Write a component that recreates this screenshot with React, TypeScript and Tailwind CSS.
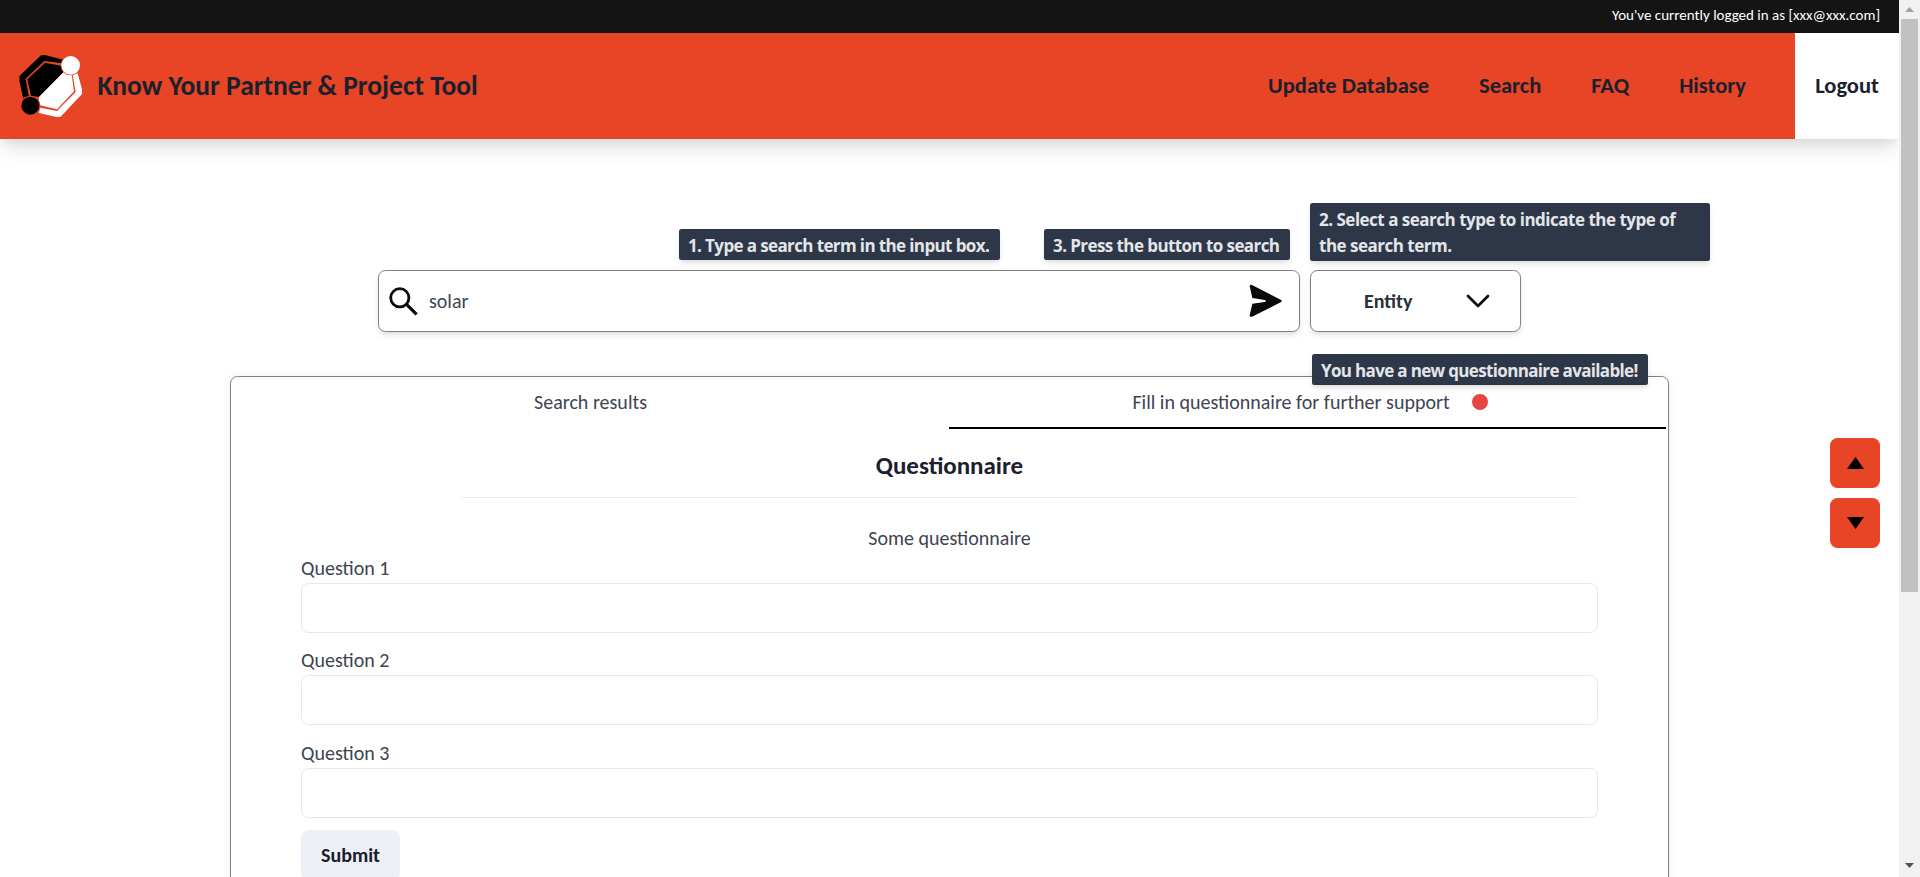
import React from "react";

function Logo() {
  return (
    <svg className="h-[64px] w-[64px] shrink-0" viewBox="26 42 192 192">
      <path d="M28 107 L92 46 L104 45 L158 59 L154 70 L102 63 L46 116 L56 172 L38 173 L27 122 Z" fill="#000" />
      <path d="M215 162 L151 230 L138 231 L86 219 L89 203 L140 213 L196 156 L187 104 L202 100 L215 148 Z" fill="#fff" />
      <path d="M51 118 L104 68 L152 77 L160 96 L86 171 L62 168 Z" fill="#000" />
      <path d="M160 96 L184 104 L191 154 L140 208 L86 195 L86 171 Z" fill="#fff" />
      <circle cx="60" cy="197" r="30" fill="#E74526" />
      <circle cx="181" cy="76" r="30" fill="#E74526" />
      <circle cx="60" cy="197" r="27" fill="#000" />
      <circle cx="181" cy="76" r="28" fill="#fff" />
    </svg>
  );
}

function Tip({ className, children }: { className: string; children: React.ReactNode }) {
  return (
    <div
      className={`absolute z-10 rounded-[2.5px] bg-[#2D3748] px-[9px] pt-[4px] pb-[1px] font-['Open_Sans'] text-[17px] leading-[26.25px] font-bold text-[#E4E5E8] shadow-[0_4px_6px_-1px_rgba(0,0,0,0.1),0_2px_4px_-1px_rgba(0,0,0,0.06)] ${className}`}
    >
      {children}
    </div>
  );
}

const boxShadow =
  "shadow-[0_4px_6px_-1px_rgba(0,0,0,0.1),0_2px_4px_-1px_rgba(0,0,0,0.06)]";

export default function App() {
  return (
    <div className="flex h-[877px] w-full overflow-hidden bg-white font-[Carlito,Lato,sans-serif] text-[20px] leading-[30px] text-[#1A202C]">
      <div className="relative flex min-w-0 flex-1 flex-col">
        <div className="flex h-[33px] shrink-0 items-start justify-end bg-[#141414] pt-[4px] pr-[19px] text-[15px] leading-[22px] text-white">
          You've currently logged in as [xxx@xxx.com]
        </div>
        <header className="flex h-[106px] shrink-0 items-center bg-[#E74526] font-bold shadow-[0_12px_18px_-3px_rgba(0,0,0,0.12),0_4px_10px_-2px_rgba(0,0,0,0.06)]">
          <div className="flex items-center gap-[15px] pl-[18.5px]">
            <Logo />
            <h1 className="text-[27.5px] whitespace-nowrap">Know Your Partner &amp; Project Tool</h1>
          </div>
          <nav className="ml-auto flex items-center gap-[50px] pr-[49px] text-[22.5px] whitespace-nowrap">
            <a>Update Database</a>
            <a>Search</a>
            <a>FAQ</a>
            <a>History</a>
          </nav>
          <a className="flex h-full w-[104px] items-center justify-center bg-white text-[22.5px]">Logout</a>
        </header>

        <div className="mt-[131px] ml-[378px] flex gap-[10px]">
          <div className={`relative flex h-[62px] w-[922px] items-center rounded-[7.5px] border border-[#808080] bg-white pl-[10px] pr-[16px] ${boxShadow}`}>
            <svg className="h-[30px] w-[30px]" viewBox="0 0 30 30" fill="none" stroke="#0a0a0a" strokeWidth="2.8">
              <circle cx="10.8" cy="11.8" r="9.1" />
              <path d="M17.3 18.2 L27.6 28.4" strokeWidth="3.2" />
            </svg>
            <span className="ml-[10px] text-[#3E4452]">solar</span>
            <svg className="ml-auto h-[33.3px] w-[34px]" viewBox="56 68 102 100">
              <path
                d="M58 75 Q58 68 65 71 L151 115 Q158 119 151 123 L65 166 Q58 168 58 162 L66 127 L103 122 Q111 119 103 116 L66 110 Z"
                fill="#0a0a0a"
              />
            </svg>
            <Tip className="top-[-42px] left-[300px] w-[321px] tracking-[-0.62px] whitespace-nowrap">
              1. Type a search term in the input box.
            </Tip>
            <Tip className="top-[-42px] left-[665px] w-[246px] tracking-[-0.58px] whitespace-nowrap">
              3. Press the button to search
            </Tip>
          </div>
          <div className={`relative flex h-[62px] w-[211px] items-center rounded-[7.5px] border border-[#808080] bg-white pl-[53px] ${boxShadow}`}>
            <span className="font-bold text-[#2A303D]">Entity</span>
            <svg className="ml-[54px] h-[14px] w-[24px]" viewBox="0 0 24 14" fill="none" stroke="#0a0a0a" strokeWidth="2.7" strokeLinecap="round" strokeLinejoin="round">
              <path d="M2 2 L12 12 L22 2" />
            </svg>
            <Tip className="top-[-68px] left-[-1px] w-[400px] tracking-[-0.5px]">
              2. Select a search type to indicate the type of the search term.
            </Tip>
          </div>
        </div>

        <section className="relative mt-[44px] ml-[230px] h-[600px] w-[1439px] shrink-0 rounded-t-[7.5px] border border-[#808080] bg-white px-[1px] shadow-[0_0_8px_rgba(0,0,0,0.08)]">
          <div className="flex h-[52px] text-[#3E4452]">
            <div className="flex w-[717px] items-center justify-center pb-[2px]">Search results</div>
            <div className="flex w-[717px] items-center justify-center border-b-2 border-black pl-[5px]">
              <span>Fill in questionnaire for further support</span>
              <span className="ml-[22px] h-[16px] w-[16px] rounded-full bg-[#E84545]" />
            </div>
          </div>
          <h2 className="mt-[18px] text-center text-[25px] leading-[37px] font-bold">Questionnaire</h2>
          <div className="mt-[13px] ml-[229px] h-px w-[1117px] bg-[#EDEEEF]" />
          <div className="mx-auto mt-[24.8px] w-[1297px] text-[#3E4452]">
            <p className="text-center">Some questionnaire</p>
            {["Question 1", "Question 2", "Question 3"].map((q) => (
              <label key={q} className="mb-[12.5px] block">
                {q}
                <span className="block h-[50px] rounded-[7.5px] border border-[#E2E8F0]" />
              </label>
            ))}
            <button className="h-[50px] w-[99px] rounded-[7.5px] bg-[#EDF1F7] font-bold text-[#1A202C]">Submit</button>
          </div>
          <Tip className="top-[-23px] left-[1081px] w-[336px] tracking-[-0.66px] whitespace-nowrap">
            You have a new questionnaire available!
          </Tip>
        </section>

        <div className="absolute top-[438px] right-[19px] flex flex-col gap-[10px]">
          <button className="flex h-[50px] w-[50px] items-center justify-center rounded-[7.5px] bg-[#E74526]">
            <svg className="h-[12px] w-[17px]" viewBox="0 0 17 12"><path d="M8.5 0 L17 12 H0 Z" /></svg>
          </button>
          <button className="flex h-[50px] w-[50px] items-center justify-center rounded-[7.5px] bg-[#E74526]">
            <svg className="h-[12px] w-[17px]" viewBox="0 0 17 12"><path d="M8.5 12 L17 0 H0 Z" /></svg>
          </button>
        </div>
      </div>

      <div className="relative flex w-[21px] shrink-0 flex-col items-center bg-[#F1F1F1]">
        <svg className="mt-[7px] h-[5px] w-[9px]" viewBox="0 0 9 5"><path d="M4.5 0 L9 5 H0 Z" fill="#A3A3A3" /></svg>
        <div className="mt-[7px] h-[573px] w-[17px] bg-[#C1C1C1]" />
        <svg className="mt-auto mb-[9px] h-[5px] w-[9px]" viewBox="0 0 9 5"><path d="M4.5 5 L9 0 H0 Z" fill="#505050" /></svg>
      </div>
    </div>
  );
}
